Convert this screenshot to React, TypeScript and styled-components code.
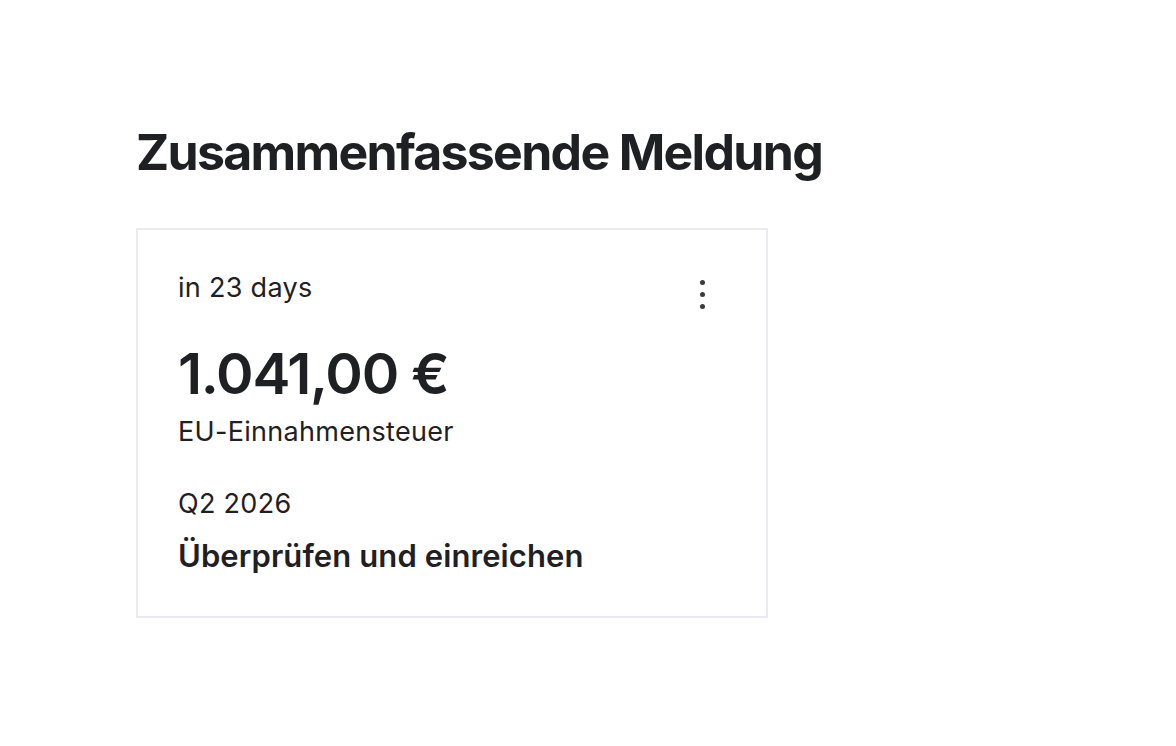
import React from "react";
import styled, { createGlobalStyle } from "styled-components";

const Global = createGlobalStyle`
  html, body { margin: 0; padding: 0; background: #ffffff; }
  body { font-family: Inter, "Liberation Sans", sans-serif; color: #1f2024; }
`;

const Page = styled.main`
  padding: 122px 0 0 136px;
  display: flex;
  flex-direction: column;
  align-items: flex-start;
`;

const Title = styled.h1`
  margin: 0;
  font-size: 50px;
  font-weight: 700;
  letter-spacing: -1.7px;
  line-height: 60px;
  color: #1f2024;
`;

const Card = styled.section`
  margin-top: 46px;
  width: 628px;
  height: 386px;
  box-sizing: content-box;
  border: 2px solid #ebebef;
  display: flex;
  flex-direction: column;
`;

const Inner = styled.div`
  padding: 40px 40px 0 40px;
  display: flex;
  flex-direction: column;
`;

const TopRow = styled.div`
  display: flex;
  justify-content: space-between;
  align-items: flex-start;
`;

const Small = styled.div<{ $mt?: number }>`
  font-size: 27px;
  font-weight: 400;
  letter-spacing: 0.3px;
  line-height: 36px;
  margin-top: ${(p) => p.$mt ?? 0}px;
  color: #1f2024;
`;

const MenuButton = styled.button`
  border: none;
  background: transparent;
  padding: 0;
  width: 24px;
  height: 36px;
  margin-right: 12px;
  margin-top: 6px;
  display: flex;
  flex-direction: column;
  align-items: center;
  justify-content: center;
  gap: 7px;
  cursor: pointer;
`;

const Dot = styled.span`
  width: 5px;
  height: 5px;
  border-radius: 50%;
  background: #3a3b40;
`;

const Amount = styled.div`
  margin-top: 30px;
  font-size: 57px;
  font-weight: 600;
  letter-spacing: -1.3px;
  line-height: 64px;
  color: #1f2024;
`;

const Action = styled.a`
  font-size: 31px;
  font-weight: 600;
  letter-spacing: 0.1px;
  line-height: 40px;
  margin-top: 14px;
  color: #1f2024;
  text-decoration: none;
`;

export default function App() {
  return (
    <>
      <Global />
      <Page>
        <Title>Zusammenfassende Meldung</Title>
        <Card>
          <Inner>
            <TopRow>
              <Small>in 23 days</Small>
              <MenuButton aria-label="Mehr">
                <Dot />
                <Dot />
                <Dot />
              </MenuButton>
            </TopRow>
            <Amount>1.041,00 €</Amount>
            <Small $mt={8}>EU-Einnahmensteuer</Small>
            <Small $mt={36}>Q2 2026</Small>
            <Action href="#">Überprüfen und einreichen</Action>
          </Inner>
        </Card>
      </Page>
    </>
  );
}
